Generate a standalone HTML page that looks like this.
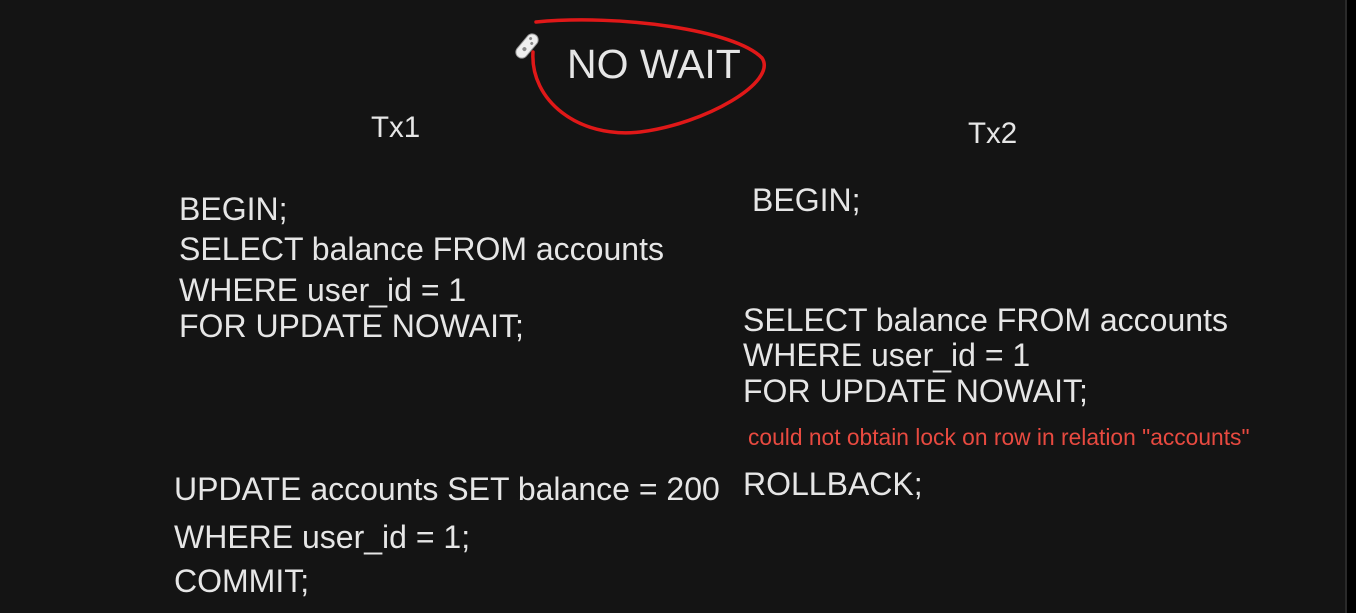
<!DOCTYPE html>
<html><head><style>
html,body{margin:0;padding:0;background:#141414;}
svg{display:block}
text{font-family:"Liberation Sans",Arial,sans-serif;fill:#e6e6e6;}
</style></head><body>
<svg width="1356" height="613" viewBox="0 0 1356 613" xmlns="http://www.w3.org/2000/svg">
<rect width="1356" height="613" fill="#141414"/>
<rect x="1345" y="0" width="11" height="613" fill="#000"/>
<rect x="1345" y="0" width="2" height="613" fill="#2a2a2a"/>
<path d="M536,22 C620,14 735,30 762,58 C778,82 705,124 640,132 C578,139 530,100 533,52" fill="none" stroke="#e01818" stroke-width="3.5" stroke-linecap="round"/>
<g transform="translate(527,46) rotate(40)">
<rect x="-6" y="-14" width="12" height="28" rx="6" fill="#eee" stroke="#999" stroke-width="1"/>
<circle cx="-2" cy="-8" r="1.5" fill="#888"/><circle cx="2" cy="-5" r="1.5" fill="#888"/><circle cx="0" cy="4" r="2" fill="#888"/>
</g>
<text x="567" y="78" font-size="41">NO WAIT</text>
<text x="371" y="137" font-size="29.5">Tx1</text>
<text x="968" y="143" font-size="29.5">Tx2</text>
<text x="179" y="220" font-size="32">BEGIN;</text>
<text x="179" y="260" font-size="32">SELECT balance FROM accounts</text>
<text x="179" y="301" font-size="32">WHERE user_id = 1</text>
<text x="179" y="337" font-size="32">FOR UPDATE NOWAIT;</text>
<text x="752" y="211" font-size="32">BEGIN;</text>
<text x="743" y="331" font-size="32">SELECT balance FROM accounts</text>
<text x="743" y="366" font-size="32">WHERE user_id = 1</text>
<text x="743" y="402" font-size="32">FOR UPDATE NOWAIT;</text>
<text x="743" y="495" font-size="32">ROLLBACK;</text>
<text x="174" y="500" font-size="32">UPDATE accounts SET balance = 200</text>
<text x="174" y="548" font-size="32">WHERE user_id = 1;</text>
<text x="174" y="592" font-size="32">COMMIT;</text>
<text x="748" y="445" font-size="22.8" style="fill:#e84a40">could not obtain lock on row in relation "accounts"</text>
</svg>
</body></html>
